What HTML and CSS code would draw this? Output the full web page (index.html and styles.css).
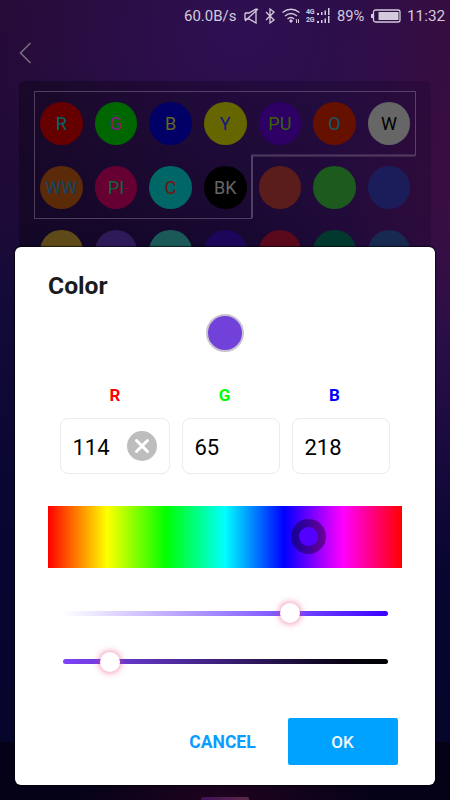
FILE: index.html
```html
<!DOCTYPE html>
<html lang="en">
<head>
<meta charset="utf-8">
<title>Color</title>
<link rel="stylesheet" href="styles.css">
</head>
<body>
<div class="screen">
  <header class="status">
    <span class="speed">60.0B/s</span>
    <svg class="mute" width="15" height="16" viewBox="0 0 15 16"><path d="M1 5h4l7-4v14l-7-4H1V5M1 13L14 1"/></svg>
    <svg class="bluetooth" width="10" height="16" viewBox="0 0 10 16"><path d="M1 4l8 8-4 3V1l4 3-8 8"/></svg>
    <svg class="wifi" width="18" height="16" viewBox="0 0 18 16"><path d="M.5 4.500Q9-2 17.500 4.500M3 8Q9 3 15 8M5.500 11Q9 8 12 11"/><path class="fill" d="M7 13l2-2 2 2-2 2zM13 12l2-1v4h-1v-3zM16 11h1v4h-1z"/></svg>
    <span class="nets"><b>4G</b><b>2G</b></span>
    <svg class="signal" width="13" height="16" viewBox="0 0 13 16"><path class="fill" d="M0 5h2v2H0zM4 4h1.500v3H4zM7.500 2.500H9V7H7.500zM11 0h1.500v7H11zM0 13h2v2H0zM4 12h1.500v3H4zM7.500 10.500H9V15H7.500zM11 8h1.500v7H11z"/></svg>
    <span class="percent">89%</span>
    <svg class="battery" width="30" height="14" viewBox="0 0 30 14"><rect x="2.500" y="1" width="26.500" height="12" rx="2"/><path class="fill" d="M0 5h2v4H0zM7.500 3h20v8h-20z"/></svg>
    <span class="clock">11:32</span>
  </header>
  <nav class="nav"><svg width="13" height="22" viewBox="0 0 13 22"><path d="M11.500 1L1.500 11l10 10"/></svg></nav>
  <main class="palette">
    <svg class="outline" width="383" height="129" viewBox="0 0 383 129"><path d="M.5.5h381v63.500H217.500v63.500H.5z"/><path d="M381.500 65H218.500v62"/></svg>
    <div class="swatches">
      <span class="dot red">R</span><span class="dot green">G</span><span class="dot blue">B</span><span class="dot yellow">Y</span><span class="dot purple">PU</span><span class="dot orange">O</span><span class="dot white">W</span>
      <span class="dot warm">WW</span><span class="dot pink">PI</span><span class="dot cyan">C</span><span class="dot black">BK</span><span class="dot brick"></span><span class="dot leaf"></span><span class="dot navy"></span>
      <span class="dot gold"></span><span class="dot violet"></span><span class="dot teal"></span><span class="dot indigo"></span><span class="dot crimson"></span><span class="dot forest"></span><span class="dot steel"></span>
    </div>
  </main>
  <footer class="tabbar"><i></i></footer>
  <section class="dialog">
    <h1>Color</h1>
    <div class="preview"></div>
    <div class="channels">
      <label class="r"><span>R</span><div class="field">114<svg width="30" height="30" viewBox="0 0 30 30"><circle cx="15" cy="15" r="15"/><path d="M9.500 9.500l11 11M20.500 9.500l-11 11"/></svg></div></label>
      <label class="g"><span>G</span><div class="field">65</div></label>
      <label class="b"><span>B</span><div class="field">218</div></label>
    </div>
    <div class="hue"><i></i></div>
    <div class="slider saturation"><i></i></div>
    <div class="slider brightness"><i></i></div>
    <div class="actions"><button class="cancel">CANCEL</button><button class="ok">OK</button></div>
  </section>
</div>
</body>
</html>
```
FILE: styles.css
```css
* { box-sizing: border-box; }
body { margin: 0; font-family: Roboto, sans-serif; }
.screen {
  position: relative;
  width: 450px;
  height: 800px;
  overflow: hidden;
  display: flex;
  flex-direction: column;
  background:
    radial-gradient(ellipse 280px 230px at 240px 35px, #2f1054 0%, rgba(47,16,84,0) 100%),
    radial-gradient(ellipse 130px 290px at 460px 80px, #3c0c38 0%, rgba(60,12,56,0) 100%),
    radial-gradient(ellipse 230px 380px at 470px 200px, rgba(58,18,84,.9) 0%, rgba(48,17,83,0) 100%),
    linear-gradient(#250a32 0, #1e0a38 210px, #130a38 310px, #080632 510px, #06052b 742px);
}
svg { display: block; fill: none; flex: none; }
.status {
  height: 32px;
  flex: none;
  display: flex;
  align-items: center;
  padding-left: 184px;
  color: #d3cbdc;
  font-size: 15.300px;
  line-height: 34px;
  white-space: nowrap;
}
.status svg { stroke: #d3cbdc; stroke-width: 1.3; }
.status .fill { fill: #d3cbdc; stroke: none; }
.speed { width: 60px; font-size: 15px; }
.bluetooth { margin-left: 6px; }
.wifi { margin-left: 7px; }
.nets { display: flex; flex-direction: column; width: 11px; margin-left: 6px; }
.nets b { font-size: 7px; line-height: 8px; letter-spacing: -.3px; }
.percent { margin-left: 7px; width: 34px; font-size: 14.700px; }
.clock { margin-left: 6px; }
.nav { height: 49px; flex: none; padding: 10px 0 0 18.500px; }
.nav path { stroke: #77717d; stroke-width: 1.500; }
.palette {
  position: relative;
  width: 412px;
  height: 661px;
  flex: none;
  margin-left: 19px;
  padding: 21px 0 0 21px;
  border-radius: 5px;
  background: linear-gradient(90deg, rgba(0,0,0,.3), rgba(8,0,30,.22));
}
.outline { position: absolute; left: 15px; top: 10px; }
.outline path { stroke: rgba(155,140,165,.42); }
.swatches {
  display: grid;
  grid-template-columns: repeat(7, 42.700px);
  grid-auto-rows: 42.700px;
  column-gap: 11.950px;
  row-gap: 21.200px;
}
.dot { border-radius: 50%; text-align: center; font-size: 18px; line-height: 44px; white-space: nowrap; }
.red { background: #660000; color: #006666; }
.green { background: #006600; color: #8a168a; }
.blue { background: #000066; color: #666620; }
.yellow { background: #666600; color: #14148a; }
.purple { background: #2e0066; color: #386600; }
.orange { background: #661100; color: #145966; }
.white { background: #666666; color: #000; }
.warm { background: #5a2a09; color: #124566; }
.pink { background: #660033; color: #126638; }
.cyan { background: #006666; color: #7a1010; }
.black { background: #000; color: #666; }
.brick { background: #5a1d1b; }
.leaf { background: #1d5a1d; }
.navy { background: #1b1d5a; }
.gold { background: #5d4a18; }
.violet { background: #2f1a59; }
.teal { background: #1a5957; }
.indigo { background: #1c065a; }
.crimson { background: #5a091c; }
.forest { background: #03382f; }
.steel { background: #18294f; }
.tabbar {
  height: 58px;
  flex: none;
  display: flex;
  align-items: flex-end;
  justify-content: center;
  background: radial-gradient(ellipse 150px 60px at 50% 100%, #20031e, #050218);
}
.tabbar i { width: 48px; height: 3px; border-radius: 2px 2px 0 0; background: linear-gradient(90deg, #421158, #5b2949); }
.dialog {
  position: absolute;
  left: 15px;
  top: 247px;
  width: 420px;
  height: 538px;
  padding: 0 33px;
  display: flex;
  flex-direction: column;
  border-radius: 6px;
  background: #fff;
  box-shadow: 0 0 1px 1px rgba(0,0,0,.65);
}
h1 { margin: 23px 0 0; font-size: 24.700px; line-height: 32px; font-weight: 700; color: #1a1b1c; }
.preview { width: 38px; height: 38px; flex: none; margin: 11.500px 0 0 158px; border: 2px solid #c8c3cf; border-radius: 50%; background: #7241da; }
.channels { display: flex; gap: 12px; margin: 31.500px 0 0 12px; }
.channels label { width: 98px; }
.channels .r { width: 110px; }
.channels span { display: block; height: 24px; line-height: 24px; font-size: 17px; font-weight: 700; text-align: center; }
.g span, .b span { padding-right: 13px; }
.r span { color: #f00; }
.g span { color: #0f0; }
.b span { color: #00f; }
.field {
  height: 56px;
  margin-top: 11px;
  padding: 3px 12px 0 11.500px;
  display: flex;
  align-items: center;
  justify-content: space-between;
  border: 1px solid #ebebeb;
  border-radius: 8px;
  font-size: 22px;
  color: #000;
}
.field svg { margin-top: -4px; }
.field circle { fill: #bdbdbd; }
.field path { stroke: #fff; stroke-width: 3; stroke-linecap: round; }
.hue {
  width: 354px;
  height: 62.500px;
  flex: none;
  margin-top: 31.500px;
  padding: 13.500px 0 0 243px;
  background: linear-gradient(90deg, #f00, #ff0 16.667%, #0f0 33.333%, #0ff 50%, #00f 66.667%, #f0f 83.333%, #f00);
}
.hue i { display: block; width: 35px; height: 35px; border: 8px solid rgba(0,0,0,.4); border-radius: 50%; background: #5200ff; background-clip: padding-box; }
.slider { width: 325px; height: 5px; flex: none; margin-left: 15px; display: flex; align-items: center; border-radius: 3px; }
.slider i { width: 20px; height: 20px; flex: none; border-radius: 50%; background: #fff; box-shadow: 0 0 6px 1px rgba(233,62,130,.55); }
.saturation { margin-top: 42.500px; padding-left: 217px; background: linear-gradient(90deg, #fff, #3c00ff); }
.brightness { margin-top: 43.500px; padding-left: 37px; background: linear-gradient(90deg, #7f42fa 0%, #6738cc 18%, #080214 86%, #000); }
.actions { display: flex; justify-content: flex-end; margin: 54px 4.500px 0 0; }
button { height: 47px; margin: 0; padding: 0; border: 0; font: 700 17px Roboto, sans-serif; }
.cancel { width: 68px; margin-right: 31px; background: none; color: #0a9cff; font-size: 17.500px; }
.ok { width: 110px; border-radius: 2px; background: #00a2ff; color: #f4faff; font-weight: 500; }
```
